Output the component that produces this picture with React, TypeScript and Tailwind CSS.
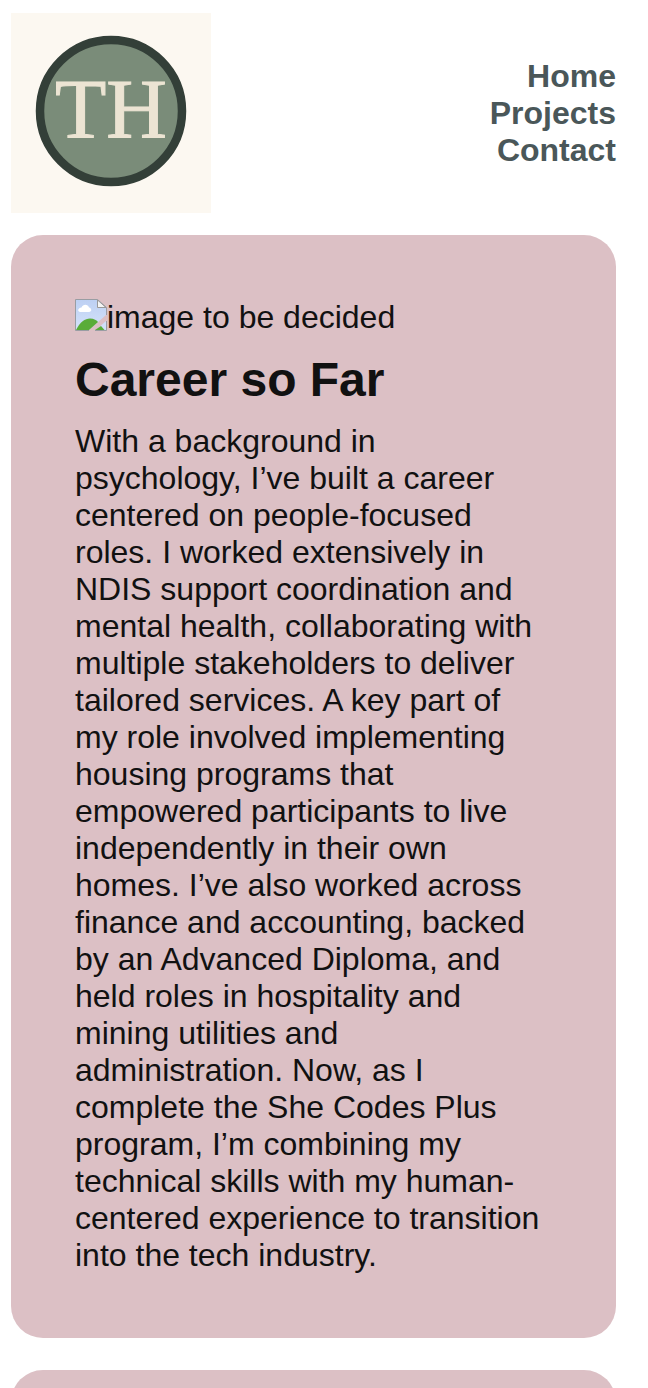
import React from "react";

function Logo() {
  return (
    <svg
      viewBox="0 0 200 200"
      role="img"
      aria-label="TH logo"
      className="size-[200px] shrink-0"
    >
      <rect width="200" height="200" fill="#fcf8f1" />
      <circle cx="100" cy="98" r="71" fill="#7a8c79" stroke="#333f38" strokeWidth="8.5" />
      <text
        x="100"
        y="125"
        textAnchor="middle"
        fontSize="84"
        fill="#ece4d3"
        stroke="#ece4d3"
        strokeWidth="1"
        className="font-['Liberation_Serif',serif]"
      >
        TH
      </text>
    </svg>
  );
}

function MissingImage() {
  return (
    <svg viewBox="0 0 32 32" aria-hidden="true" className="size-8 shrink-0">
      <defs>
        <linearGradient id="sky" x1="0" y1="0" x2="0" y2="1">
          <stop offset="0" stopColor="#bdd0f3" />
          <stop offset="1" stopColor="#d5e3fa" />
        </linearGradient>
      </defs>
      <path d="M1 1H22V9H31V16L14 31H1Z" fill="url(#sky)" />
      <path d="M31 22V31H21Z" fill="#cfdef8" />
      <path d="M5 13C2 12 3 9 6.500 8.500C8 4.500 13 5 14 8.500C17 9 17 13 14 13Z" fill="#fff" />
      <path d="M1 31C5 23 10 19.500 15 19.500C19 19.500 22 21.500 23 23L14 31Z" fill="#5aac38" />
      <path d="M20 31L26 27L29.500 31Z" fill="#5aac38" />
      <path d="M22.500 1V8.500H31Z" fill="#f5f5f5" stroke="#999" />
      <path d="M14 31.500H.5V.5H22.500L31.500 8.500V16M31.500 22V31.500H20" fill="none" stroke="#999da3" />
    </svg>
  );
}

export default function App() {
  return (
    <div className="bg-white pt-[13px] pr-8 pl-[11px] font-['Liberation_Sans',Arial,sans-serif] text-[32px] leading-[37px] text-[#111111]">
      <header className="flex items-center justify-between">
        <Logo />
        <nav className="flex flex-col items-end font-bold text-[#4a5759]">
          <a href="#home">Home</a>
          <a href="#projects">Projects</a>
          <a href="#contact">Contact</a>
        </nav>
      </header>
      <main className="mt-[22px] flex flex-col gap-8">
        <section className="flex flex-col gap-4 rounded-[32px] bg-[#dcc0c5] p-16">
          <div className="flex items-start">
            <MissingImage />
            <span>image to be decided</span>
          </div>
          <h1 className="text-5xl leading-[55px] font-bold">Career so Far</h1>
          <p className="pr-2">
            With a background in psychology, I’ve built a career centered on
            people-focused roles. I worked extensively in NDIS support
            coordination and mental health, collaborating with multiple
            stakeholders to deliver tailored services. A key part of my role
            involved implementing housing programs that empowered participants
            to live independently in their own homes. I’ve also worked across
            finance and accounting, backed by an Advanced Diploma, and held
            roles in hospitality and mining utilities and administration. Now,
            as I complete the She Codes Plus program, I’m combining my technical
            skills with my human-centered experience to transition into the tech
            industry.
          </p>
        </section>
        <div className="h-[18px] overflow-hidden">
          <section className="rounded-t-[32px] bg-[#dcc0c5] p-16" />
        </div>
      </main>
    </div>
  );
}
